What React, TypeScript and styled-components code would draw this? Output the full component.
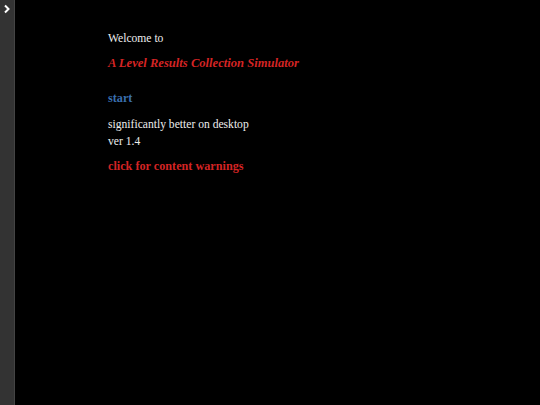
import React from "react";
import styled, { createGlobalStyle } from "styled-components";

const GlobalStyle = createGlobalStyle`
  html, body {
    margin: 0;
    padding: 0;
    background: #000;
    height: 100%;
  }
  #root {
    height: 100%;
  }
`;

const StyledPage = styled.div`
  display: flex;
  height: 405px;
  background-color: #000;
  font-family: "Liberation Serif", "Times New Roman", serif;
  font-size: 11.6px;
  line-height: 17px;
  color: #eee;
`;

const StyledSideBar = styled.div`
  width: 14px;
  background-color: #333;
  border-right: 1px solid #444;
  display: flex;
  flex-direction: column;
  align-items: center;
`;

const StyledToggle = styled.button`
  margin: 2px 0 0 0;
  padding: 0;
  width: 14px;
  height: 14px;
  background: transparent;
  border: none;
  display: flex;
  align-items: center;
  justify-content: center;
  cursor: pointer;
`;

const StyledPassage = styled.div`
  padding: 30px 0 0 93px;
`;

const StyledLine = styled.p<{ $gap?: number }>`
  margin: ${(p) => p.$gap ?? 0}px 0 0 0;
`;

const StyledTitle = styled.p`
  margin: 8px 0 0 0;
  color: #d42424;
  font-weight: bold;
  font-style: italic;
  font-size: 12.6px;
`;

const StyledLink = styled.a<{ $color: string; $gap: number }>`
  display: block;
  margin-top: ${(p) => p.$gap}px;
  color: ${(p) => p.$color};
  font-weight: bold;
  font-size: 12.2px;
  text-decoration: none;
  cursor: pointer;
`;

export default function App() {
  return (
    <>
      <GlobalStyle />
      <StyledPage>
        <StyledSideBar>
          <StyledToggle aria-label="toggle sidebar">
            <svg width="8" height="10" viewBox="0 0 8 10">
              <path d="M2 1.5 L5.5 5 L2 8.5" stroke="#fff" strokeWidth="2" fill="none" />
            </svg>
          </StyledToggle>
        </StyledSideBar>
        <StyledPassage>
          <StyledLine>Welcome to</StyledLine>
          <StyledTitle>A Level Results Collection Simulator</StyledTitle>
          <StyledLink $color="#3a6fae" $gap={18}>start</StyledLink>
          <StyledLine $gap={9}>significantly better on desktop</StyledLine>
          <StyledLine>ver 1.4</StyledLine>
          <StyledLink $color="#d42424" $gap={8}>click for content warnings</StyledLink>
        </StyledPassage>
      </StyledPage>
    </>
  );
}
